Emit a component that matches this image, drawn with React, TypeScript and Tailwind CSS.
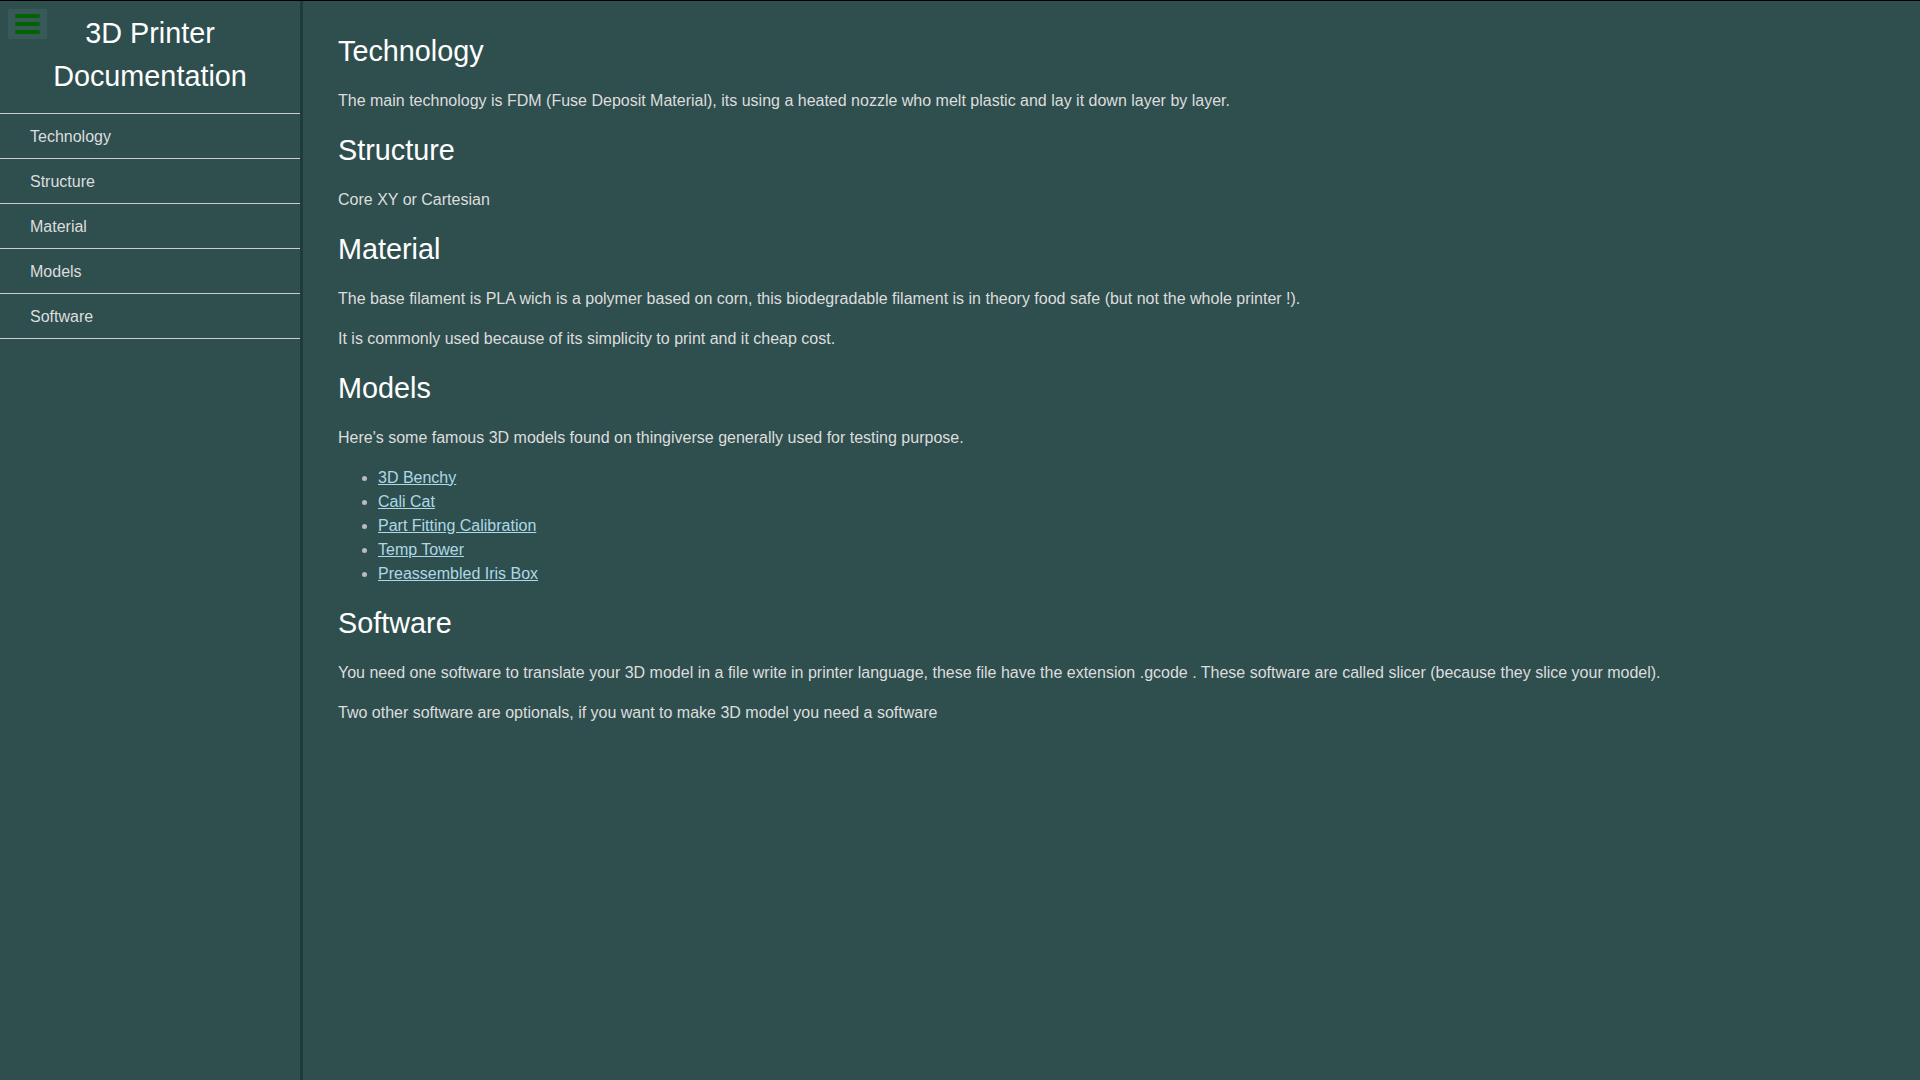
import React from 'react';

const sections = ['Technology', 'Structure', 'Material', 'Models', 'Software'];

const models = [
  '3D Benchy',
  'Cali Cat',
  'Part Fitting Calibration',
  'Temp Tower',
  'Preassembled Iris Box',
];

function Burger() {
  return (
    <button className="absolute left-[8px] top-[8px] flex h-[30px] w-[39px] flex-col items-center justify-center gap-[4px] bg-white/5">
      <span className="block h-[4px] w-[25px] rounded-full bg-[#006400]" />
      <span className="block h-[4px] w-[25px] rounded-full bg-[#006400]" />
      <span className="block h-[4px] w-[25px] rounded-full bg-[#006400]" />
    </button>
  );
}

export default function App() {
  return (
    <div
      className="flex h-screen w-full overflow-hidden border-t border-black bg-[#2f4f4f] text-[16px] leading-[24px] text-[#dddddd]"
      style={{ fontFamily: '"Liberation Sans", Arial, sans-serif' }}
    >
      <nav className="relative h-full w-[303px] shrink-0 border-r-[3px] border-[#1f3b3b]">
        <Burger />
        <header className="border-b border-[#cccccc] pb-[15px] pt-[11px] text-center text-[28.8px] leading-[43.2px] text-white">
          3D Printer
          <br />
          Documentation
        </header>
        <ul>
          {sections.map((s) => (
            <li key={s} className="border-b border-[#cccccc]">
              <a href={`#${s}`} className="block pb-[9px] pl-[30px] pt-[11px] text-[#dddddd]">
                {s}
              </a>
            </li>
          ))}
        </ul>
      </nav>

      <main className="flex-1 overflow-auto pl-[35px] pt-[29px]">
        <section id="Technology">
          <h2 className="text-[28.8px] leading-[43.2px] text-white">Technology</h2>
          <p className="mt-[16px]">
            The main technology is FDM (Fuse Deposit Material), its using a heated nozzle who melt plastic and lay it down layer by layer.
          </p>
        </section>

        <section id="Structure" className="mt-[16px]">
          <h2 className="text-[28.8px] leading-[43.2px] text-white">Structure</h2>
          <p className="mt-[16px]">Core XY or Cartesian</p>
        </section>

        <section id="Material" className="mt-[16px]">
          <h2 className="text-[28.8px] leading-[43.2px] text-white">Material</h2>
          <p className="mt-[15px]">
            The base filament is PLA wich is a polymer based on corn, this biodegradable filament is in theory food safe (but not the whole printer !).
          </p>
          <p className="mt-[16px]">It is commonly used because of its simplicity to print and it cheap cost.</p>
        </section>

        <section id="Models" className="mt-[16px]">
          <h2 className="text-[28.8px] leading-[43.2px] text-white">Models</h2>
          <p className="mt-[16px]">Here's some famous 3D models found on thingiverse generally used for testing purpose.</p>
          <ul className="mt-[16px] list-disc pl-[40px] marker:text-[#bbbbbb]">
            {models.map((m) => (
              <li key={m}>
                <a href="#" className="text-[#add8e6] underline">
                  {m}
                </a>
              </li>
            ))}
          </ul>
        </section>

        <section id="Software" className="mt-[16px]">
          <h2 className="text-[28.8px] leading-[43.2px] text-white">Software</h2>
          <p className="mt-[16px]">
            You need one software to translate your 3D model in a file write in printer language, these file have the extension .gcode . These software are called slicer (because they slice your model).
          </p>
          <p className="mt-[16px]">Two other software are optionals, if you want to make 3D model you need a software</p>
        </section>
      </main>
    </div>
  );
}
